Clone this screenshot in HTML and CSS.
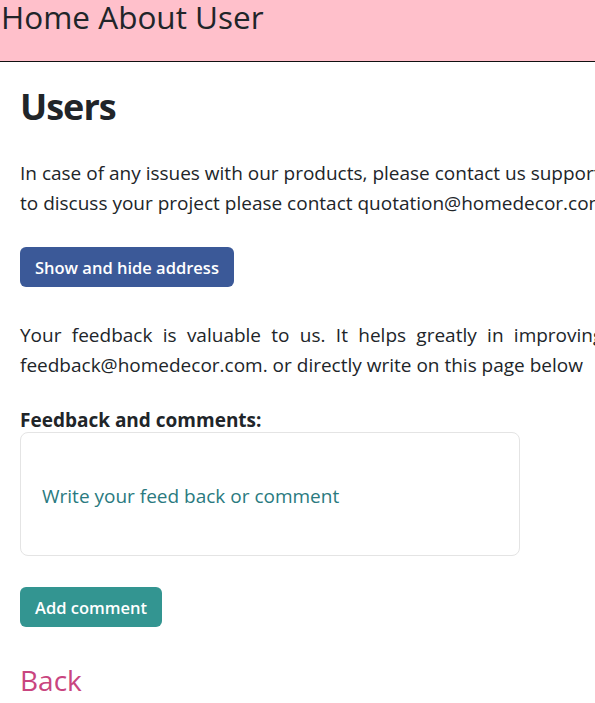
FILE: index.html
```html
<!DOCTYPE html>
<html lang="en">
<head>
<meta charset="utf-8">
<title>Users</title>
<link rel="stylesheet" href="styles.css">
</head>
<body>
<div class="viewport">
  <header class="topbar">
    <nav class="nav"><a href="#">Home</a> <a href="#">About</a> <a href="#">User</a></nav>
  </header>
  <main class="page">
    <h1 class="title">Users</h1>
    <p class="text">In case of any issues with our products, please contact us support@homedecor.com. If you want<br>to discuss your project please contact quotation@homedecor.com.</p>
    <button class="btn btn-blue" type="button">Show and hide address</button>
    <p class="text"><span class="line-justify">Your feedback is valuable to us. It helps greatly in improving our products. Please send it to</span>feedback@homedecor.com. or directly write on this page below</p>
    <form class="feedback">
      <label class="label" for="comment">Feedback and comments:</label>
      <textarea class="comment" id="comment" placeholder="Write your feed back or comment"></textarea>
      <button class="btn btn-teal" type="button">Add comment</button>
    </form>
    <a class="back" href="#">Back</a>
  </main>
</div>
</body>
</html>
```
FILE: styles.css
```css
html, body {
  margin: 0;
  padding: 0;
  background: #ffffff;
}
body {
  font-family: "Open Sans", "Noto Sans", sans-serif;
  color: #212529;
  font-size: 19px;
  line-height: 30px;
}
.viewport {
  width: 595px;
  overflow: hidden;
}
.topbar {
  background: #ffc0cb;
  height: 61px;
  border-bottom: 1px solid #111111;
  width: 100%;
}
.nav {
  padding-left: 1px;
  font-size: 31.5px;
  line-height: 34px;
  white-space: nowrap;
}
.nav a {
  color: #212529;
  text-decoration: none;
}
.page {
  width: 890px;
  padding: 0 20px;
}
.title {
  margin: 21px 0 0;
  font-size: 36px;
  line-height: 48px;
  font-weight: 700;
  letter-spacing: -1px;
}
.text {
  margin: 27px 0 0;
  white-space: nowrap;
}
.text + .btn + .text {
  margin-top: 33px;
}
.line-justify {
  display: block;
  white-space: normal;
  text-align: justify;
  text-align-last: justify;
}
.btn {
  display: block;
  border: 0;
  border-radius: 6px;
  color: #ffffff;
  font-family: inherit;
  font-size: 16.5px;
  font-weight: 600;
  height: 40px;
  padding: 0 15px;
  cursor: pointer;
}
.btn-blue {
  background: #3b5998;
  margin-top: 29px;
}
.btn-teal {
  background: #339591;
  margin-top: 31px;
}
.feedback {
  margin-top: 29px;
  display: flex;
  flex-direction: column;
  align-items: flex-start;
}
.label {
  font-weight: 700;
  line-height: 23px;
}
.comment {
  box-sizing: border-box;
  width: 500px;
  height: 124px;
  margin: 0;
  border: 1px solid #e4e4e4;
  border-radius: 8px;
  padding: 48px 21px 10px;
  font-family: inherit;
  font-size: 19px;
  line-height: 30px;
  resize: none;
  color: #212529;
}
.comment::placeholder {
  color: #2a7a80;
  opacity: 1;
}
.back {
  display: inline-block;
  margin-top: 35px;
  font-size: 28px;
  line-height: 36px;
  color: #c9457f;
  text-decoration: none;
}
```
